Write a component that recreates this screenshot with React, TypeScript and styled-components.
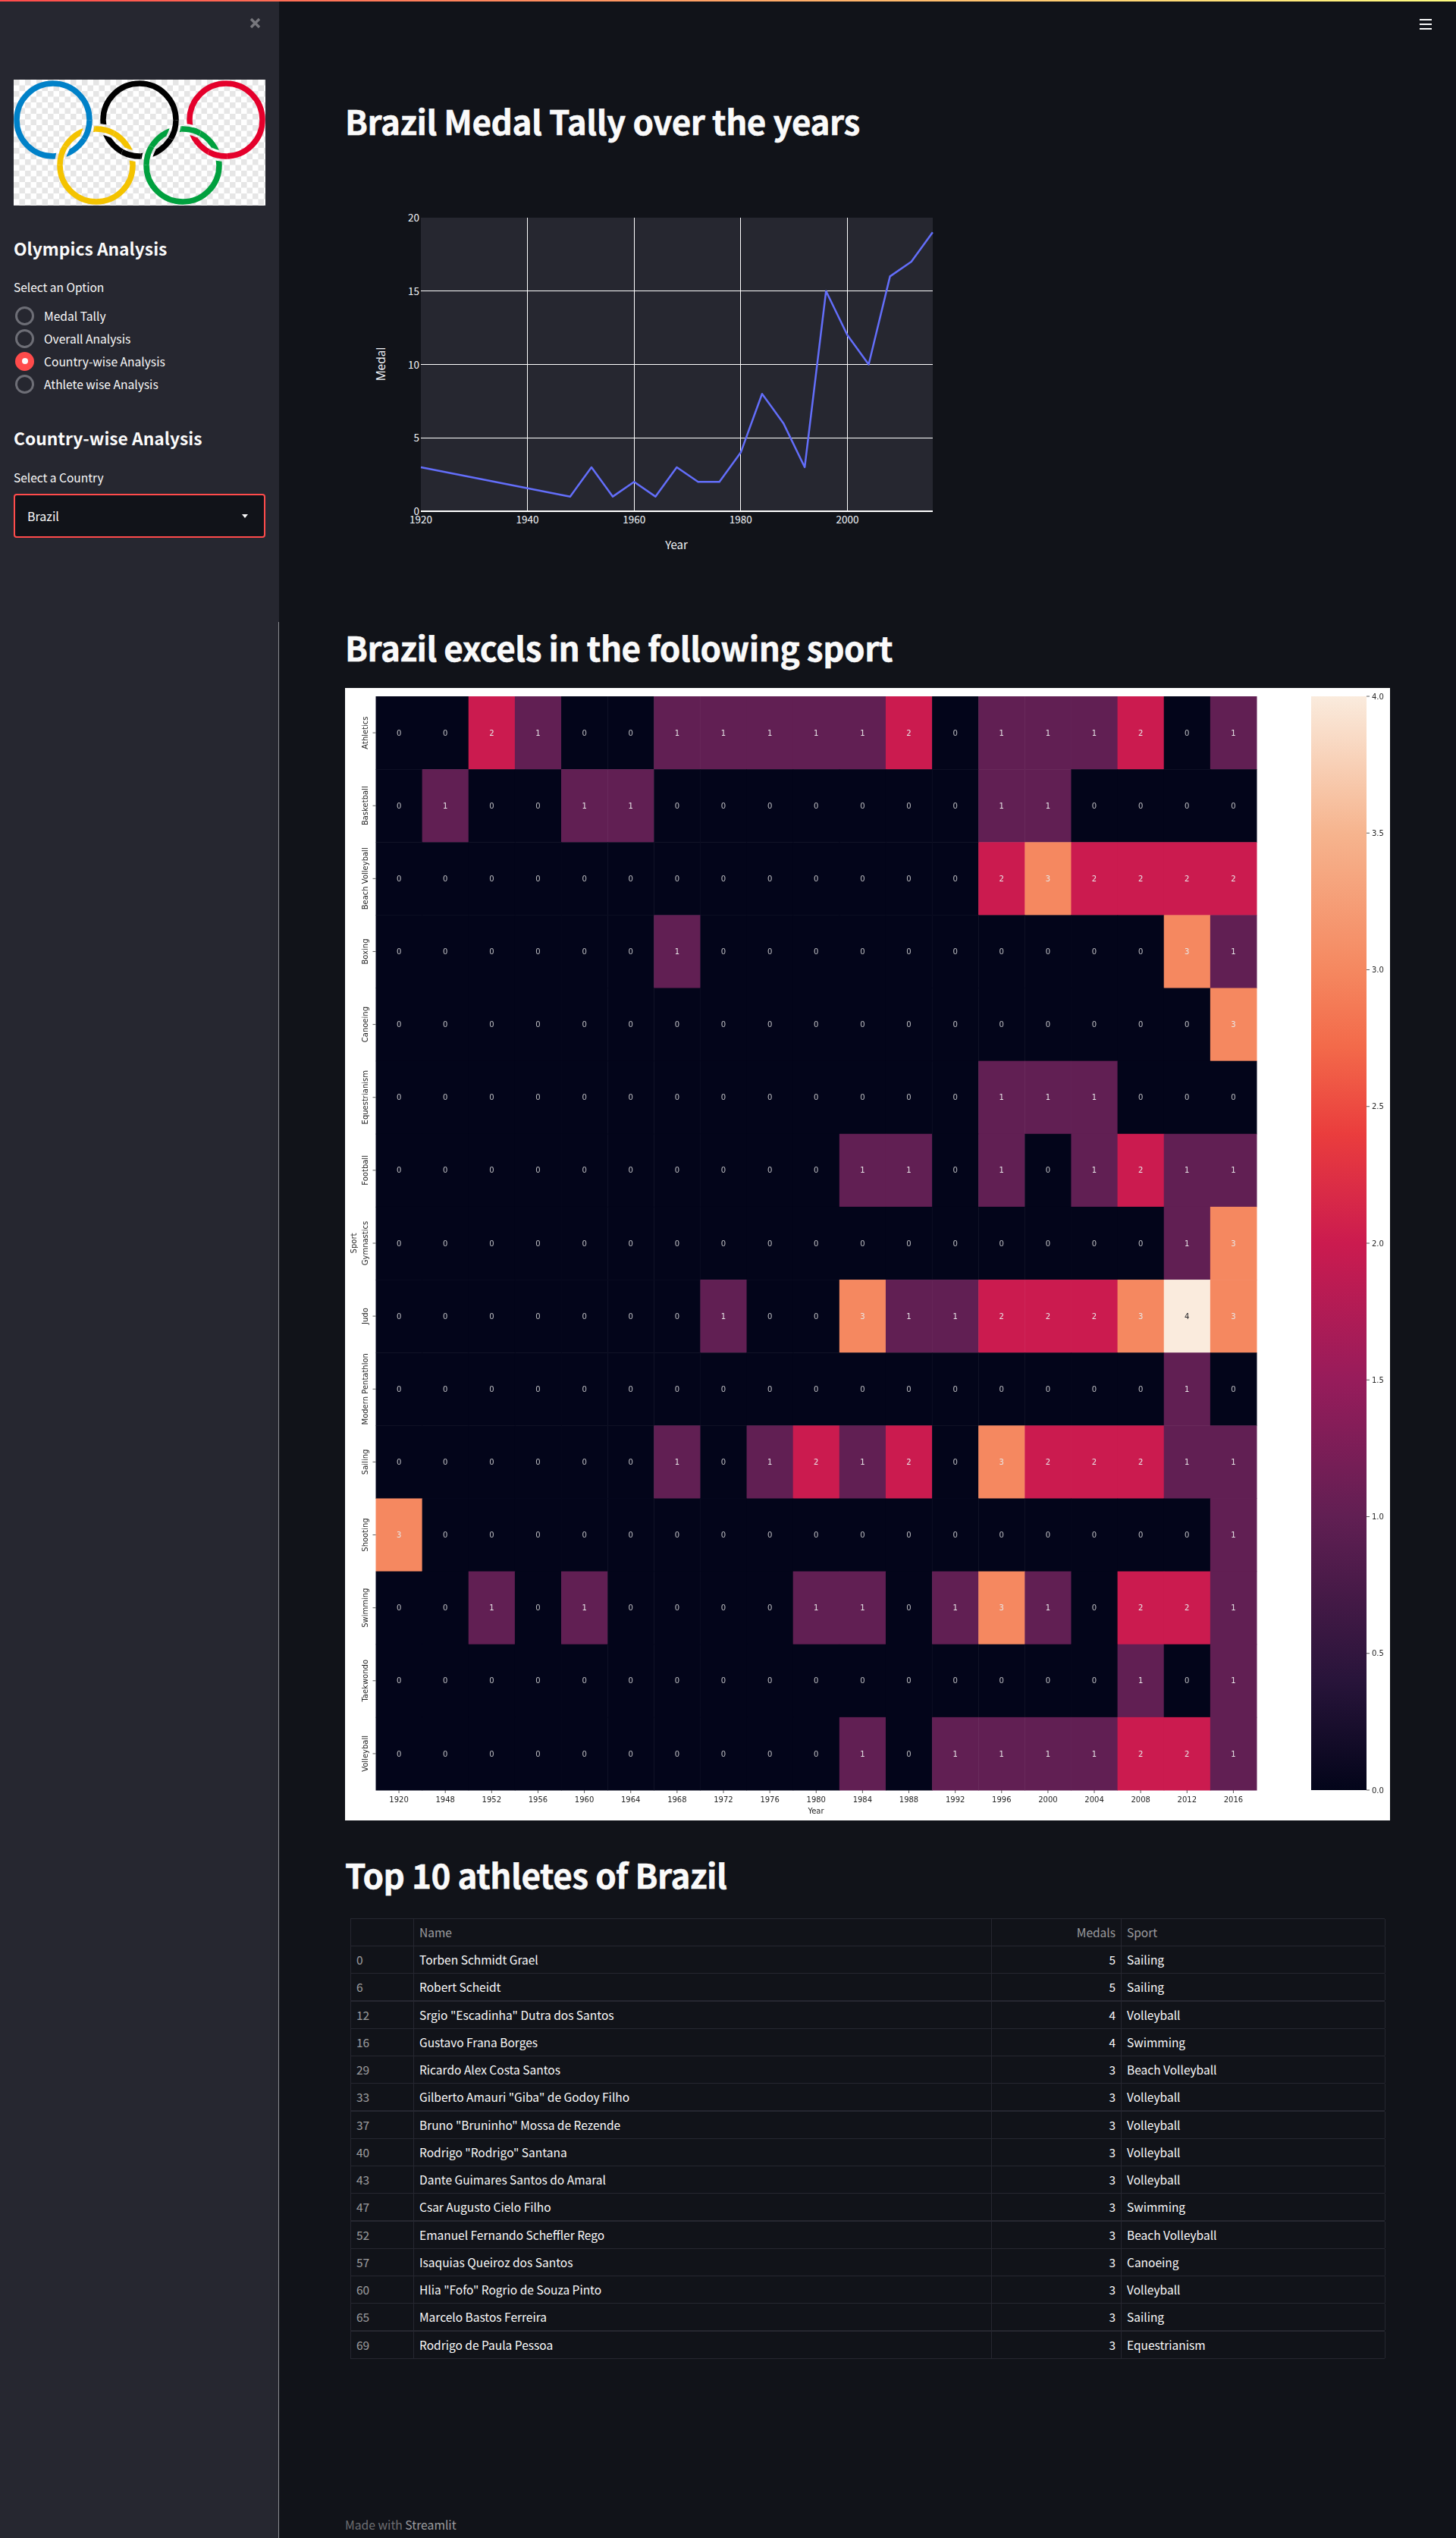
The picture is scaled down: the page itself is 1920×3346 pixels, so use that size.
import React from "react"
import styled, { createGlobalStyle } from "styled-components"

const FONT = `"Noto Sans CJK SC", "Source Sans Pro", "Noto Sans", sans-serif`

const GlobalStyle = createGlobalStyle`
  html, body {
    margin: 0;
    padding: 0;
    background: #111319;
  }
  body {
    font-family: ${FONT};
    color: #fafafa;
  }
`

const years = [1920, 1948, 1952, 1956, 1960, 1964, 1968, 1972, 1976, 1980, 1984, 1988, 1992, 1996, 2000, 2004, 2008, 2012, 2016]
const tally = [3, 1, 3, 1, 2, 1, 3, 2, 2, 4, 8, 6, 3, 15, 12, 10, 16, 17, 19]

const heat: [string, number[]][] = [
  ["Athletics", [0, 0, 2, 1, 0, 0, 1, 1, 1, 1, 1, 2, 0, 1, 1, 1, 2, 0, 1]],
  ["Basketball", [0, 1, 0, 0, 1, 1, 0, 0, 0, 0, 0, 0, 0, 1, 1, 0, 0, 0, 0]],
  ["Beach Volleyball", [0, 0, 0, 0, 0, 0, 0, 0, 0, 0, 0, 0, 0, 2, 3, 2, 2, 2, 2]],
  ["Boxing", [0, 0, 0, 0, 0, 0, 1, 0, 0, 0, 0, 0, 0, 0, 0, 0, 0, 3, 1]],
  ["Canoeing", [0, 0, 0, 0, 0, 0, 0, 0, 0, 0, 0, 0, 0, 0, 0, 0, 0, 0, 3]],
  ["Equestrianism", [0, 0, 0, 0, 0, 0, 0, 0, 0, 0, 0, 0, 0, 1, 1, 1, 0, 0, 0]],
  ["Football", [0, 0, 0, 0, 0, 0, 0, 0, 0, 0, 1, 1, 0, 1, 0, 1, 2, 1, 1]],
  ["Gymnastics", [0, 0, 0, 0, 0, 0, 0, 0, 0, 0, 0, 0, 0, 0, 0, 0, 0, 1, 3]],
  ["Judo", [0, 0, 0, 0, 0, 0, 0, 1, 0, 0, 3, 1, 1, 2, 2, 2, 3, 4, 3]],
  ["Modern Pentathlon", [0, 0, 0, 0, 0, 0, 0, 0, 0, 0, 0, 0, 0, 0, 0, 0, 0, 1, 0]],
  ["Sailing", [0, 0, 0, 0, 0, 0, 1, 0, 1, 2, 1, 2, 0, 3, 2, 2, 2, 1, 1]],
  ["Shooting", [3, 0, 0, 0, 0, 0, 0, 0, 0, 0, 0, 0, 0, 0, 0, 0, 0, 0, 1]],
  ["Swimming", [0, 0, 1, 0, 1, 0, 0, 0, 0, 1, 1, 0, 1, 3, 1, 0, 2, 2, 1]],
  ["Taekwondo", [0, 0, 0, 0, 0, 0, 0, 0, 0, 0, 0, 0, 0, 0, 0, 0, 1, 0, 1]],
  ["Volleyball", [0, 0, 0, 0, 0, 0, 0, 0, 0, 0, 1, 0, 1, 1, 1, 1, 2, 2, 1]],
]

const athletes: [number, string, number, string][] = [
  [0, "Torben Schmidt Grael", 5, "Sailing"],
  [6, "Robert Scheidt", 5, "Sailing"],
  [12, 'Srgio "Escadinha" Dutra dos Santos', 4, "Volleyball"],
  [16, "Gustavo Frana Borges", 4, "Swimming"],
  [29, "Ricardo Alex Costa Santos", 3, "Beach Volleyball"],
  [33, 'Gilberto Amauri "Giba" de Godoy Filho', 3, "Volleyball"],
  [37, 'Bruno "Bruninho" Mossa de Rezende', 3, "Volleyball"],
  [40, 'Rodrigo "Rodrigo" Santana', 3, "Volleyball"],
  [43, "Dante Guimares Santos do Amaral", 3, "Volleyball"],
  [47, "Csar Augusto Cielo Filho", 3, "Swimming"],
  [52, "Emanuel Fernando Scheffler Rego", 3, "Beach Volleyball"],
  [57, "Isaquias Queiroz dos Santos", 3, "Canoeing"],
  [60, 'Hlia "Fofo" Rogrio de Souza Pinto', 3, "Volleyball"],
  [65, "Marcelo Bastos Ferreira", 3, "Sailing"],
  [69, "Rodrigo de Paula Pessoa", 3, "Equestrianism"],
]

const options = ["Medal Tally", "Overall Analysis", "Country-wise Analysis", "Athlete wise Analysis"]

const Page = styled.div`
  position: relative;
  display: flex;
  width: 1920px;
  height: 3346px;
  overflow: hidden;
  background: #111319;
`

const TopBar = styled.div`
  position: absolute;
  top: 0;
  left: 0;
  right: 0;
  height: 2px;
  background: linear-gradient(90deg, #ff4b4b, #fffd80);
  z-index: 2;
`

const Sidebar = styled.aside`
  position: relative;
  flex: 0 0 368px;
  box-sizing: border-box;
  padding: 23px 18px 0;
  background: #262730;

  &::after {
    content: "";
    position: absolute;
    top: 820px;
    bottom: 0;
    right: 0;
    width: 1px;
    background: #8b8b90;
  }
`

const CloseRow = styled.div`
  display: flex;
  justify-content: flex-end;
  height: 15px;
  padding-right: 6px;
  margin-bottom: 67px;
`

const LogoBox = styled.svg`
  display: block;
  width: 332px;
  height: 166px;
  filter: blur(0.35px);
`

const SideHeading = styled.h2<{ $gap: number }>`
  margin: ${(p) => p.$gap}px 0 0;
  font-size: 22.8px;
  line-height: 30px;
  font-weight: 700;
  color: #fafafa;
`

const FieldLabel = styled.div<{ $gap: number }>`
  margin-top: ${(p) => p.$gap}px;
  font-size: 15.5px;
  line-height: 20px;
  color: #fafafa;
`

const RadioGroup = styled.div`
  display: flex;
  flex-direction: column;
  margin-top: 13px;
`

const RadioRow = styled.div`
  display: flex;
  align-items: center;
  height: 30px;
  padding-left: 2px;
  font-size: 15.6px;
  line-height: 28px;
  color: #fafafa;
`

const RadioDot = styled.span<{ $checked: boolean }>`
  display: flex;
  align-items: center;
  justify-content: center;
  box-sizing: border-box;
  width: 25px;
  height: 25px;
  margin-right: 13px;
  border-radius: 50%;
  border: 3px solid ${(p) => (p.$checked ? "#ff4b4b" : "#6d6e76")};
  background: ${(p) => (p.$checked ? "#ff4b4b" : "transparent")};

  &::after {
    content: "";
    display: ${(p) => (p.$checked ? "block" : "none")};
    width: 8px;
    height: 8px;
    border-radius: 50%;
    background: #fafafa;
  }
`

const SelectBox = styled.div`
  display: flex;
  align-items: center;
  justify-content: space-between;
  box-sizing: border-box;
  height: 58px;
  margin-top: 12px;
  padding: 0 21px 0 16px;
  border: 2px solid #ff4b4b;
  border-radius: 4px;
  background: #111319;
  font-size: 16px;
`

const Caret = styled.span`
  width: 0;
  height: 0;
  border-left: 4.5px solid transparent;
  border-right: 4.5px solid transparent;
  border-top: 5px solid #fafafa;
`

const Main = styled.main`
  position: relative;
  flex: 1;
  box-sizing: border-box;
  padding: 128px 0 0 87px;
`

const MenuButton = styled.svg`
  position: absolute;
  top: 25px;
  right: 32px;
  width: 16px;
  height: 14px;
`

const Title = styled.h1<{ $gap?: number }>`
  margin: ${(p) => p.$gap ?? 0}px 0 0;
  padding-bottom: 4px;
  font-size: 44px;
  line-height: 62px;
  font-weight: 700;
  letter-spacing: -0.45px;
  -webkit-text-stroke: 0.5px #fafafa;
  color: #fafafa;
  white-space: nowrap;
`

const LineChart = styled.svg`
  display: block;
  width: 1378px;
  height: 628px;
`

const HeatChart = styled.svg`
  display: block;
  width: 1378px;
  height: 1493px;
  margin-top: 19px;
  background: #ffffff;
  filter: blur(0.45px);
`

const Table = styled.div`
  width: 1364px;
  margin: 23px 0 0 7px;
  box-sizing: border-box;
  border-top: 1px solid #262730;
  font-size: 15.5px;
`

const Row = styled.div<{ $thick: boolean }>`
  display: grid;
  grid-template-columns: 83px 762px 171px 348px;
  box-sizing: border-box;
  height: ${(p) => (p.$thick ? 37 : 36)}px;
  border-bottom: ${(p) => (p.$thick ? 2 : 1)}px solid #262730;
  border-left: 1px solid #262730;
`

const Cell = styled.div<{ $muted?: boolean; $right?: boolean }>`
  display: flex;
  align-items: center;
  justify-content: ${(p) => (p.$right ? "flex-end" : "flex-start")};
  padding: 0 7px 2px 7px;
  border-right: 1px solid #262730;
  color: ${(p) => (p.$muted ? "rgba(250, 250, 250, 0.6)" : "#fafafa")};
  white-space: nowrap;
`

const Footer = styled.footer`
  margin-top: 209px;
  font-size: 15.7px;
  line-height: 20px;
  color: rgba(250, 250, 250, 0.4);

  span {
    color: rgba(250, 250, 250, 0.6);
  }
`

const rings = {
  blue: { cx: 52, cy: 53, color: "#0081c8" },
  black: { cx: 166, cy: 53, color: "#000000" },
  red: { cx: 280, cy: 53, color: "#e4002b" },
  yellow: { cx: 109, cy: 113, color: "#f4c300" },
  green: { cx: 223, cy: 113, color: "#00a03e" },
}

// which ring runs on top at each crossing, logo coords
const crossings: [keyof typeof rings, number, number][] = [
  ["blue", 98, 66],
  ["yellow", 63, 100],
  ["yellow", 120, 66],
  ["black", 155, 100],
  ["black", 212, 66],
  ["green", 177, 100],
  ["green", 234, 66],
  ["red", 269, 100],
]

const Logo = () => (
  <LogoBox viewBox="0 0 332 166">
    <defs>
      <pattern id="checker" width="15" height="15" patternUnits="userSpaceOnUse">
        <rect width="15" height="15" fill="#ffffff" />
        <rect width="7.5" height="7.5" fill="#e6e6e6" />
        <rect x="7.5" y="7.5" width="7.5" height="7.5" fill="#e6e6e6" />
      </pattern>
      {crossings.map(([, x, y], i) => (
        <clipPath id={`cross${i}`} key={i}>
          <circle cx={x} cy={y} r="13" />
        </clipPath>
      ))}
    </defs>
    <rect width="332" height="166" fill="url(#checker)" />
    {Object.values(rings).map((r) => (
      <circle key={r.color} cx={r.cx} cy={r.cy} r="48" fill="none" stroke={r.color} strokeWidth="7.5" />
    ))}
    {crossings.map(([name], i) => {
      const r = rings[name]
      return (
        <g key={i} clipPath={`url(#cross${i})`}>
          <circle cx={r.cx} cy={r.cy} r="48" fill="none" stroke="url(#checker)" strokeWidth="14" />
          <circle cx={r.cx} cy={r.cy} r="48" fill="none" stroke={r.color} strokeWidth="7.5" />
        </g>
      )
    })}
  </LogoBox>
)

const px = (year: number) => 555 + (year - 1920) * 7.03
const py = (v: number) => 674 - v * 19.35

const TallyChart = () => {
  const points = years.map((y, i) => `${px(y)},${py(tally[i])}`).join(" ")
  return (
    <LineChart viewBox="455 194 1378 628">
      <rect x="555" y="287" width="675" height="387" fill="#262730" />
      <g stroke="#ffffff" strokeWidth="1" shapeRendering="crispEdges">
        {[1940, 1960, 1980, 2000].map((y) => (
          <line key={y} x1={px(y)} x2={px(y)} y1="287" y2="674" />
        ))}
        {[5, 10, 15].map((v) => (
          <line key={v} x1="555" x2="1230" y1={py(v)} y2={py(v)} />
        ))}
      </g>
      <polyline points={points} fill="none" stroke="#636efa" strokeWidth="2.5" strokeLinejoin="round" />
      <line x1="555" x2="1230" y1="674" y2="674" stroke="#ffffff" strokeWidth="2" />
      <g fill="#f2f5fa" fontSize="13.5" fontFamily={FONT}>
        {[1920, 1940, 1960, 1980, 2000].map((y) => (
          <text key={y} x={px(y)} y="690" textAnchor="middle">
            {y}
          </text>
        ))}
        {[0, 5, 10, 15, 20].map((v) => (
          <text key={v} x="553" y={py(v) + 5} textAnchor="end">
            {v}
          </text>
        ))}
        <text x="892" y="724" textAnchor="middle" fontSize="15">
          Year
        </text>
        <text
          transform="translate(508 480) rotate(-90)"
          textAnchor="middle"
          fontSize="15.5"
          fontFamily='"Open Sans", sans-serif'
        >
          Medal
        </text>
      </g>
    </LineChart>
  )
}

const palette = ["#03051a", "#611f53", "#cb1b4f", "#f58860", "#faebdd"]
const HEAT_LEFT = 495.5
const HEAT_TOP = 918
const CELL_W = (1657 - HEAT_LEFT) / 19
const CELL_H = (2360 - HEAT_TOP) / 15
const BAR_H = 2360 - HEAT_TOP

const HeatMap = () => (
  <HeatChart viewBox="455 907 1378 1493">
    <defs>
      <linearGradient id="rocket" x1="0" y1="1" x2="0" y2="0">
        <stop offset="0" stopColor="#03051a" />
        <stop offset="0.1" stopColor="#28143a" />
        <stop offset="0.25" stopColor="#611f53" />
        <stop offset="0.375" stopColor="#971c5b" />
        <stop offset="0.5" stopColor="#cb1b4f" />
        <stop offset="0.6" stopColor="#ea3d3d" />
        <stop offset="0.68" stopColor="#f36a4a" />
        <stop offset="0.75" stopColor="#f58860" />
        <stop offset="0.875" stopColor="#f6b48e" />
        <stop offset="1" stopColor="#faebdd" />
      </linearGradient>
    </defs>
    <g fontFamily='"DejaVu Sans", sans-serif' fontSize="10">
      {heat.map(([sport, values], r) => {
        const y = HEAT_TOP + r * CELL_H
        const mid = y + CELL_H / 2
        return (
          <g key={sport}>
            {values.map((v, c) => {
              const x = HEAT_LEFT + c * CELL_W
              return (
                <g key={c}>
                  <rect x={x} y={y} width={CELL_W + 0.5} height={CELL_H + 0.5} fill={palette[v]} />
                  <text
                    x={x + CELL_W / 2}
                    y={mid + 3.6}
                    textAnchor="middle"
                    fill={v === 4 ? "#26262a" : "#e8e8e8"}
                    opacity={v === 0 ? 0.8 : 1}
                  >
                    {v}
                  </text>
                </g>
              )
            })}
            <line x1="491.5" x2="495.5" y1={mid} y2={mid} stroke="#333" strokeWidth="0.8" />
            <text transform={`translate(485 ${mid}) rotate(-90)`} textAnchor="middle" fill="#262626">
              {sport}
            </text>
          </g>
        )
      })}
      {years.map((year, c) => {
        const x = HEAT_LEFT + (c + 0.5) * CELL_W
        return (
          <g key={year}>
            <line x1={x} x2={x} y1="2360" y2="2364" stroke="#333" strokeWidth="0.8" />
            <text x={x} y="2376" textAnchor="middle" fill="#262626">
              {year}
            </text>
          </g>
        )
      })}
      <text x="1076" y="2391" textAnchor="middle" fill="#262626">
        Year
      </text>
      <text transform="translate(470 1639) rotate(-90)" textAnchor="middle" fill="#262626">
        Sport
      </text>
      <rect x="1729" y={HEAT_TOP} width="73" height={BAR_H} fill="url(#rocket)" />
      {[0, 0.5, 1, 1.5, 2, 2.5, 3, 3.5, 4].map((v) => {
        const y = 2360 - (v / 4) * BAR_H
        return (
          <g key={v}>
            <line x1="1802" x2="1806" y1={y} y2={y} stroke="#333" strokeWidth="0.8" />
            <text x="1809" y={y + 3.6} fill="#262626">
              {v.toFixed(1)}
            </text>
          </g>
        )
      })}
    </g>
  </HeatChart>
)

export default function App() {
  return (
    <Page>
      <GlobalStyle />
      <TopBar />
      <Sidebar>
        <CloseRow>
          <svg width="15" height="15" viewBox="0 0 15 15">
            <path d="M2 2L13 13M13 2L2 13" stroke="#77777d" strokeWidth="3.4" fill="none" />
          </svg>
        </CloseRow>
        <Logo />
        <SideHeading $gap={42}>Olympics Analysis</SideHeading>
        <FieldLabel $gap={25}>Select an Option</FieldLabel>
        <RadioGroup>
          {options.map((o, i) => (
            <RadioRow key={o}>
              <RadioDot $checked={i === 2} />
              {o}
            </RadioRow>
          ))}
        </RadioGroup>
        <SideHeading $gap={42}>Country-wise Analysis</SideHeading>
        <FieldLabel $gap={26}>Select a Country</FieldLabel>
        <SelectBox>
          Brazil
          <Caret />
        </SelectBox>
      </Sidebar>
      <Main>
        <MenuButton viewBox="0 0 16 14">
          <rect width="16" height="2" fill="#fafafa" />
          <rect y="6" width="16" height="2" fill="#fafafa" />
          <rect y="12" width="16" height="2" fill="#fafafa" />
        </MenuButton>
        <Title>Brazil Medal Tally over the years</Title>
        <TallyChart />
        <Title>Brazil excels in the following sport</Title>
        <HeatMap />
        <Title $gap={40}>Top 10 athletes of Brazil</Title>
        <Table>
          <Row $thick={false}>
            <Cell />
            <Cell $muted>Name</Cell>
            <Cell $muted $right>
              Medals
            </Cell>
            <Cell $muted>Sport</Cell>
          </Row>
          {athletes.map(([idx, name, medals, sport], i) => (
            <Row key={idx} $thick={i % 4 === 1}>
              <Cell $muted>{idx}</Cell>
              <Cell>{name}</Cell>
              <Cell $right>{medals}</Cell>
              <Cell>{sport}</Cell>
            </Row>
          ))}
        </Table>
        <Footer>
          Made with <span>Streamlit</span>
        </Footer>
      </Main>
    </Page>
  )
}
